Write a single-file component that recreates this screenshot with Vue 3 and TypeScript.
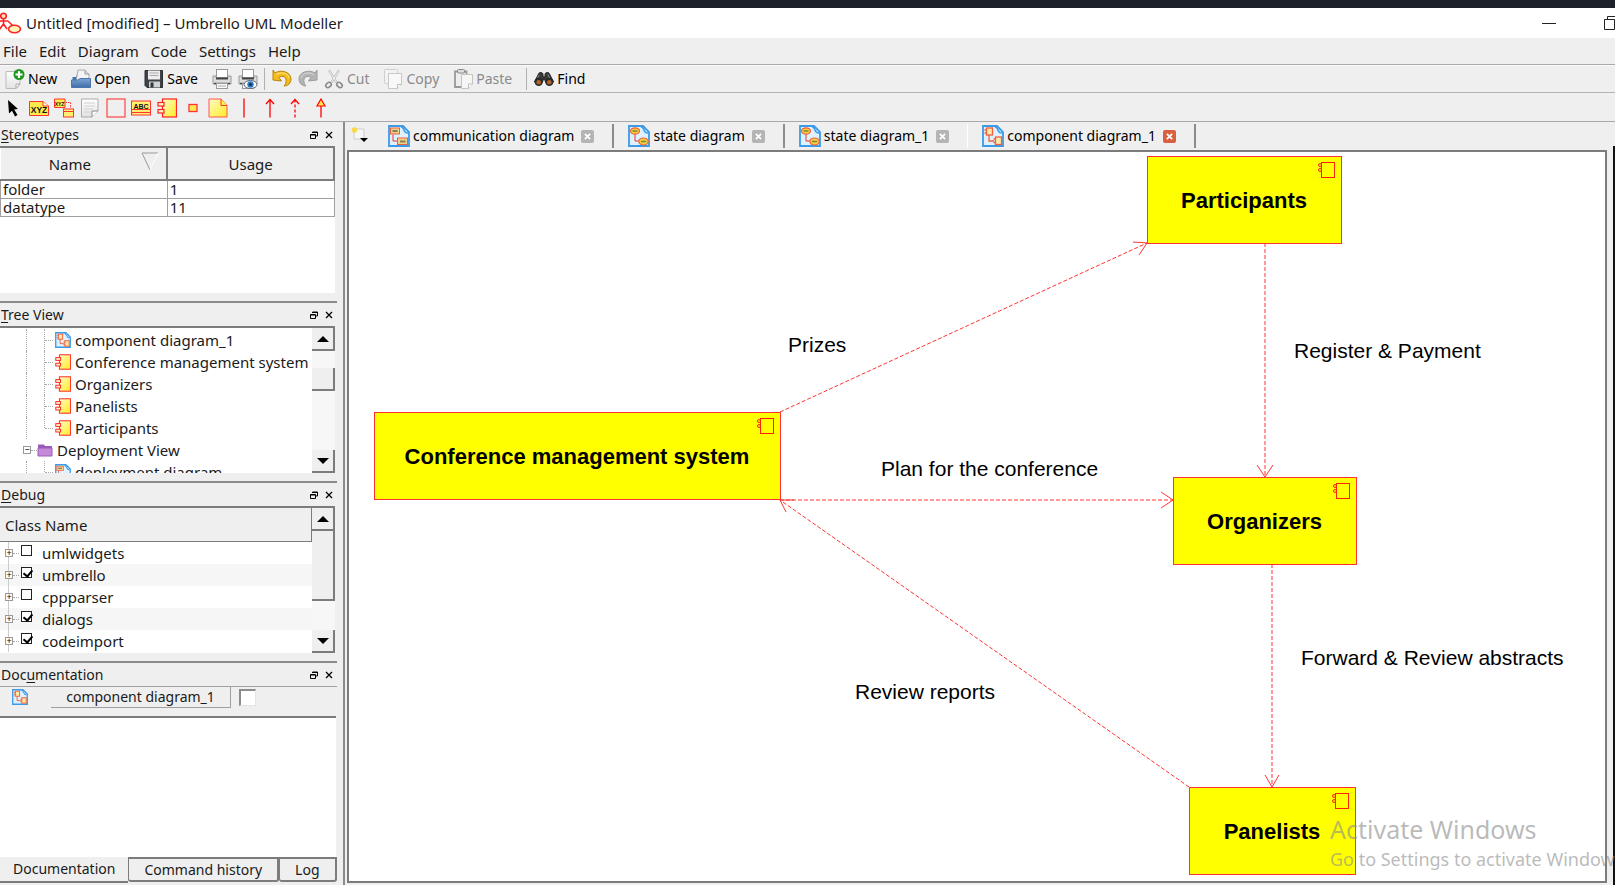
<script setup lang="ts">
import { ref } from 'vue'

interface Action { label?: string; name: string; icon: string; disabled?: boolean; sepBefore?: boolean }
interface Tab { label: string; icon: string }
interface Node { name: string; x: number; y: number; w: number }
interface Edge { line: string; head: string }
interface Label { text: string; x: number; y: number }

const menus = ['File', 'Edit', 'Diagram', 'Code', 'Settings', 'Help']

const actions: Action[] = [
  { label: 'New', name: 'New', icon: 'i-new' },
  { label: 'Open', name: 'Open', icon: 'i-open' },
  { label: 'Save', name: 'Save', icon: 'i-save' },
  { name: 'Print', icon: 'i-print' },
  { name: 'Print preview', icon: 'i-preview' },
  { name: 'Undo', icon: 'i-undo', sepBefore: true },
  { name: 'Redo', icon: 'i-redo', disabled: true },
  { label: 'Cut', name: 'Cut', icon: 'i-cut', disabled: true },
  { label: 'Copy', name: 'Copy', icon: 'i-copy', disabled: true },
  { label: 'Paste', name: 'Paste', icon: 'i-paste', disabled: true },
  { label: 'Find', name: 'Find', icon: 'i-find', sepBefore: true },
]

const tools = [
  ['Select', 't-select'], ['Artifact', 't-xyz'], ['Subsystem', 't-sub'], ['Note', 't-note'],
  ['Box', 't-box'], ['Text', 't-abc'], ['Component', 't-comp'], ['Port', 't-port'],
  ['Package', 't-pack'], ['Line', 't-line'], ['Association', 't-arrow'],
  ['Dependency', 't-dash'], ['Generalization', 't-gen'],
]

const stereotypes = [{ name: 'folder', usage: 1 }, { name: 'datatype', usage: 11 }]

const treeItems = [
  { label: 'component diagram_1', icon: 'd-component' },
  { label: 'Conference management system', icon: 't-comp' },
  { label: 'Organizers', icon: 't-comp' },
  { label: 'Panelists', icon: 't-comp' },
  { label: 'Participants', icon: 't-comp' },
]

const classes = ref([
  { name: 'umlwidgets', on: false },
  { name: 'umbrello', on: true },
  { name: 'cppparser', on: false },
  { name: 'dialogs', on: true },
  { name: 'codeimport', on: true },
])

const tabs: Tab[] = [
  { label: 'communication diagram', icon: 'd-comm' },
  { label: 'state diagram', icon: 'd-state' },
  { label: 'state diagram_1', icon: 'd-state' },
  { label: 'component diagram_1', icon: 'd-component' },
]
const activeTab = ref(3)

const dockTabs = ['Documentation', 'Command history', 'Log']
const activeDock = ref(0)
const documentation = ref('')
const docModified = ref(false)

const nodes: Node[] = [
  { name: 'Participants', x: 798, y: 4, w: 194 },
  { name: 'Conference management system', x: 25, y: 260, w: 406 },
  { name: 'Organizers', x: 824, y: 325, w: 183 },
  { name: 'Panelists', x: 840, y: 635, w: 166 },
]

const edges: Edge[] = [
  { line: 'M431 260L798 91', head: 'M784 90L798 91L790 103' },
  { line: 'M916 91V325', head: 'M908 313L916 325L924 313' },
  { line: 'M431 348H824', head: 'M812 340L824 348L812 356' },
  { line: 'M840 635L431 348', head: 'M445 348H431L437 360' },
  { line: 'M923 412V635', head: 'M916 623L923 635L930 623' },
]

const labels: Label[] = [
  { text: 'Prizes', x: 439, y: 200 },
  { text: 'Register & Payment', x: 945, y: 206 },
  { text: 'Plan for the conference', x: 532, y: 324 },
  { text: 'Forward & Review abstracts', x: 952, y: 513 },
  { text: 'Review reports', x: 506, y: 547 },
]
</script>

<template>
  <svg class="defs" aria-hidden="true">
    <defs>
      <linearGradient id="g-yel" x1="0" y1="0" x2="1" y2="1"><stop offset="0" stop-color="#fffbc8" /><stop offset="1" stop-color="#ffec20" /></linearGradient>
      <linearGradient id="g-page" x1="0" y1="0" x2="0" y2="1"><stop offset="0" stop-color="#fff" /><stop offset="1" stop-color="#e2e2e2" /></linearGradient>
      <linearGradient id="g-blue" x1="0" y1="0" x2="0" y2="1"><stop offset="0" stop-color="#7fa6d3" /><stop offset="1" stop-color="#3d6ca8" /></linearGradient>

      <symbol id="i-app" viewBox="0 0 22 22">
        <g fill="none" stroke="#f22" stroke-width="1.6">
          <circle cx="3.5" cy="4" r="2.8" fill="#ffd9c0" /><path d="M3.5 7V12M-1 9H8M3.5 12L-1 18M3.5 12L7 17M8 9L14 15" />
          <ellipse cx="14.5" cy="17" rx="6" ry="3.8" fill="#fff3b8" />
        </g>
      </symbol>
      <symbol id="i-new" viewBox="0 0 20 20">
        <path d="M1 2.5H15V15L11 19.5H1Z" fill="url(#g-page)" stroke="#bbb" /><path d="M15 15H11V19.5Z" fill="#fff" stroke="#aaa" />
        <circle cx="14" cy="5.5" r="5.5" fill="#1f9a1f" /><path d="M14 2V9M10.5 5.5H17.5" stroke="#fff" stroke-width="2.2" />
      </symbol>
      <symbol id="i-open" viewBox="0 0 20 20">
        <path d="M1.5 18V8H5L6 5.5H18V18Z" fill="#4474b0" /><path d="M7 1H14L18 5V13H5Z" fill="#f4f4f4" stroke="#aaa" /><path d="M14 1V5H18" fill="#ddd" stroke="#999" />
        <path d="M.5 11H7L9 9.5H19.5V18.5H.5Z" fill="url(#g-blue)" stroke="#4a76ad" />
      </symbol>
      <symbol id="i-save" viewBox="0 0 20 20">
        <path d="M1 1.5H18.5V18.5H3L1 16.5Z" fill="#3f4347" stroke="#2b2e31" /><rect x="4" y="1.5" width="12" height="9" fill="#eee" /><path d="M5.5 4H14.5M5.5 6.5H14.5" stroke="#aaa" />
        <rect x="5" y="12.5" width="11" height="6" fill="#cfd3d6" /><rect x="6.5" y="13.5" width="3" height="5" fill="#33373a" />
      </symbol>
      <symbol id="i-print" viewBox="0 0 20 20">
        <rect x="4.5" y=".5" width="11" height="8" fill="#fff" stroke="#999" /><path d="M1 7H4V9H16V7H19V15H1Z" fill="#dcdcdc" stroke="#999" />
        <path d="M4 8.5H16V10.5H4Z" fill="#444" /><path d="M2 14.5H18" stroke="#444" stroke-width="1.4" /><rect x="4.5" y="14.5" width="11" height="5" fill="#fafafa" stroke="#999" /><path d="M6 17H14" stroke="#aaa" />
      </symbol>
      <symbol id="i-preview" viewBox="0 0 20 20">
        <use href="#i-print" width="20" height="20" /><ellipse cx="12.5" cy="15.5" rx="6.5" ry="4" fill="#fff" stroke="#567" /><circle cx="12.5" cy="15.5" r="3.2" fill="#2b78bd" /><circle cx="12.5" cy="15.5" r="1.3" fill="#123" />
      </symbol>
      <symbol id="i-undo" viewBox="0 0 20 20">
        <path d="M1 1L3 4C9 0 19 3 19 10C19 14 16 17 12 17C15 14 15 8 11 7.5C9 7.2 8 8 7 8.5L9.5 12L1 11Z" fill="#f3bb1d" stroke="#b98505" />
        <path d="M4 5.5C9 2.5 16 4 17 9" fill="none" stroke="#ffe78a" />
      </symbol>
      <symbol id="i-redo" viewBox="0 0 20 20">
        <path d="M19 1L17 4C11 0 1 3 1 10C1 14 4 17 8 17C5 14 5 8 9 7.5C11 7.2 12 8 13 8.5L10.5 12L19 11Z" fill="#b4b4b4" stroke="#9c9c9c" />
        <path d="M16 5.5C11 2.5 4 4 3 9" fill="none" stroke="#d8d8d8" />
      </symbol>
      <symbol id="i-cut" viewBox="0 0 20 20">
        <path d="M5 1L12.5 13.5M15 1L7.5 13.5" stroke="#b9b9b9" stroke-width="2.4" /><path d="M5 1L12.5 13.5M15 1L7.5 13.5" stroke="#f2f2f2" />
        <g fill="none" stroke="#8b8b8b" stroke-width="1.6"><ellipse cx="4.5" cy="16" rx="2.2" ry="3" transform="rotate(50 4.5 16)" /><ellipse cx="15.5" cy="16" rx="2.2" ry="3" transform="rotate(-50 15.5 16)" /></g>
      </symbol>
      <symbol id="i-copy" viewBox="0 0 20 20">
        <rect x="1.5" y=".5" width="13" height="14" rx="1" fill="#f3f3f3" stroke="#cfcfcf" /><path d="M5.5 4.5H18.5V15.5L14.5 19.5H5.5Z" fill="#f8f8f8" stroke="#c8c8c8" /><path d="M18.5 15.5H14.5V19.5" fill="#fff" stroke="#bbb" />
      </symbol>
      <symbol id="i-paste" viewBox="0 0 20 20">
        <path d="M2 2.5H13.5V18H2Z" fill="#eee" stroke="#999" stroke-width="1.8" /><rect x="4.5" y=".5" width="7" height="3.5" rx="1" fill="#ddd" stroke="#888" />
        <path d="M8.5 5.5H19.5V15L15.5 19.5H8.5Z" fill="#f6f6f6" stroke="#c4c4c4" /><path d="M19.5 15H15.5V19.5" fill="#fff" stroke="#bbb" />
      </symbol>
      <symbol id="i-find" viewBox="0 0 20 20">
        <path d="M4.500 5C5 3 9 3 9 5.5V8H11V5.5C11 3 15 3 15.5 5L19.500 13H11.5L10.5 10H9.5L8.5 13H.5Z" fill="#3a3a3a" stroke="#1d1d1d" />
        <circle cx="4.7" cy="12.7" r="4.2" fill="#2a2a2a" /><circle cx="15.3" cy="12.7" r="4.2" fill="#2a2a2a" /><circle cx="4.7" cy="13.2" r="2.3" fill="#b4632a" /><circle cx="15.3" cy="13.2" r="2.3" fill="#b4632a" />
        <path d="M5 6L3.5 9M14 5.5L15.5 9" stroke="#888" />
      </symbol>

      <symbol id="t-select" viewBox="0 0 20 20"><path d="M5 2L15 11L11.2 11.5L14.5 17L12 18.5L9 12.8L6 15.5Z" fill="#000" /></symbol>
      <symbol id="t-xyz" viewBox="0 0 20 20">
        <path d="M.5 3.5H14L19.5 8V17.5H.5Z" fill="#ffe94d" stroke="#f33" /><path d="M14 3.5V8H19.5" fill="#fffbd0" stroke="#f33" />
        <text x="10" y="14.5" class="glyph" font-size="8.5">XYZ</text>
      </symbol>
      <symbol id="t-sub" viewBox="0 0 20 20">
        <path d="M.5 1H11V9.5H.5Z" fill="#ffe94d" stroke="#f33" /><text x="5.500" y="7.5" class="glyph" font-size="5">XYZ</text>
        <path d="M11.5 4.5H16.5V10" fill="none" stroke="#f33" stroke-dasharray="1.5 1" />
        <rect x="9.5" y="11" width="10" height="8" fill="#ffee70" stroke="#f33" /><path d="M9.5 13.5H19.5" stroke="#f33" />
      </symbol>
      <symbol id="t-note" viewBox="0 0 20 20">
        <path d="M1.5 1H18V13L12 19H1.5Z" fill="url(#g-page)" stroke="#aaa" /><path d="M4 5H15M4 8H15M4 11H13M4 14H11" stroke="#d0d0d4" /><path d="M18 13H12V19" fill="#fff" stroke="#888" />
      </symbol>
      <symbol id="t-box" viewBox="0 0 20 20"><rect x="1" y="1" width="18" height="18" fill="#efefef" stroke="#f22" /></symbol>
      <symbol id="t-abc" viewBox="0 0 20 20">
        <rect x=".5" y="3" width="19" height="14" fill="#ffef70" stroke="#f33" /><text x="10" y="10.5" class="glyph" font-size="7">ABC</text><path d="M.5 11.5H19.5M.5 14.5H19.5" stroke="#f33" />
      </symbol>
      <symbol id="t-comp" viewBox="0 0 20 20">
        <rect x="5.5" y="1" width="14" height="18" fill="url(#g-yel)" stroke="#f22" stroke-width="1.2" /><g fill="#fff8c0" stroke="#f22" stroke-width="1.2"><rect x="1" y="4.5" width="6" height="3.5" /><rect x="1" y="11.5" width="6" height="3.5" /></g>
      </symbol>
      <symbol id="t-port" viewBox="0 0 20 20"><rect x="6" y="6.5" width="8" height="7" fill="#ffe94d" stroke="#f33" stroke-width="1.3" /></symbol>
      <symbol id="t-pack" viewBox="0 0 20 20"><path d="M1 1H13L19 7.5V19H1Z" fill="url(#g-yel)" stroke="#f55" /><path d="M13 1V7.5H19" fill="#fff340" stroke="#f33" /></symbol>
      <symbol id="t-line" viewBox="0 0 20 20"><path d="M10 .5V19.5" stroke="#f00" stroke-width="1.3" /></symbol>
      <symbol id="t-arrow" viewBox="0 0 20 20"><path d="M10 1.5V19.5M6 6L10 1.5L14 6" fill="none" stroke="#f00" stroke-width="1.3" /></symbol>
      <symbol id="t-dash" viewBox="0 0 20 20"><path d="M10 1.5V19.5" stroke="#f00" stroke-width="1.3" stroke-dasharray="3 2" /><path d="M6 6L10 1.5L14 6" fill="none" stroke="#f00" stroke-width="1.3" /></symbol>
      <symbol id="t-gen" viewBox="0 0 20 20"><path d="M10 8V19.5" stroke="#f00" stroke-width="1.3" /><path d="M10 1L14 8H6Z" fill="#ffe94d" stroke="#f00" stroke-width="1.2" /></symbol>

      <symbol id="d-page" viewBox="0 0 22 22">
        <path d="M1 1H15L21 7V21H1Z" fill="#dff1ff" stroke="#3a9be8" stroke-width="1.8" /><path d="M13 2C17 2 14.5 8 20 8" fill="#fff" stroke="#3a9be8" stroke-width="1.5" />
      </symbol>
      <symbol id="d-comm" viewBox="0 0 22 22">
        <use href="#d-page" width="22" height="22" /><g fill="#f0d090" stroke="#f0603c"><rect x="2.5" y="3" width="9" height="6" /><rect x="9.5" y="13" width="10" height="6.5" /></g><path d="M5 9.5V16H9" fill="none" stroke="#e33" /><path d="M4.5 6H9.5M12 16.5H17.5" stroke="#8a8050" stroke-width="2" />
      </symbol>
      <symbol id="d-state" viewBox="0 0 22 22">
        <use href="#d-page" width="22" height="22" /><g fill="#f0d040" stroke="#f0603c" stroke-width="1.2"><ellipse cx="7" cy="6" rx="4.5" ry="3.2" /><ellipse cx="15.5" cy="16.5" rx="4.7" ry="3.5" /></g><path d="M7 9.5V16H10.5" fill="none" stroke="#e33" /><path d="M4.5 6H9.5M13 16.5H18" stroke="#8a8030" stroke-width="1.5" />
      </symbol>
      <symbol id="d-component" viewBox="0 0 22 22">
        <use href="#d-page" width="22" height="22" /><g fill="#ffe9a8" stroke="#f0603c" stroke-width="1.3"><rect x="4.5" y="3" width="6" height="7" /><rect x="13.5" y="12" width="6" height="7.5" /></g><path d="M2.5 5H5M2.5 8H5M7 10V16H12M11.5 14H14M11.5 17.5H14" fill="none" stroke="#f0603c" stroke-width="1.3" />
      </symbol>

      <symbol id="i-folder" viewBox="0 0 16 16"><path d="M1 2.5H7L8 4H15V14H1Z" fill="#9a5cb8" /><path d="M1 6H15V14H1Z" fill="#c48ad8" stroke="#9a5cb8" /></symbol>
      <symbol id="i-float" viewBox="0 0 8 8"><path d="M2.5 2V1H7.5V5H6M2.5 1.5H7.5M.5 3.5H5.5V7.5H.5ZM.5 4H5.5" fill="none" stroke="#000" /></symbol>
      <symbol id="i-x" viewBox="0 0 8 8"><path d="M1 1L7 7M7 1L1 7" stroke="#000" stroke-width="1.3" /></symbol>
      <symbol id="i-newtab" viewBox="0 0 20 20">
        <path d="M4 3H14V13H4Z" fill="#f6f6f6" stroke="#ccc" /><circle cx="4.5" cy="4" r="2.8" fill="#f7d94a" /><path d="M10 12H18L14 16Z" fill="#000" />
      </symbol>
    </defs>
  </svg>

  <div class="window">
    <div class="desktop-strip"></div>
    <header class="titlebar">
      <svg class="app-icon"><use href="#i-app" /></svg>
      <h1>Untitled [modified] – Umbrello UML Modeller</h1>
      <div class="win-buttons">
        <button type="button" aria-label="Minimize"><svg viewBox="0 0 14 14"><path d="M0 7.5H14" stroke="#222" /></svg></button>
        <button type="button" aria-label="Restore"><svg viewBox="0 0 14 14"><path d="M.5 3.5H10.5V13.5H.5ZM3.5 3V.5H13.5V10.5H11" fill="none" stroke="#222" /></svg></button>
      </div>
    </header>

    <nav class="menubar"><button v-for="m in menus" :key="m" type="button">{{ m }}</button></nav>

    <div class="toolbar" role="toolbar" aria-label="Main">
      <template v-for="a in actions" :key="a.name">
        <span v-if="a.sepBefore" class="sep"></span>
        <button type="button" :disabled="a.disabled" :aria-label="a.name" :class="{ labelled: a.label }">
          <svg class="ico"><use :href="'#' + a.icon" /></svg><span v-if="a.label">{{ a.label }}</span>
        </button>
      </template>
    </div>

    <div class="toolbox" role="toolbar" aria-label="Diagram tools">
      <button v-for="[name, icon] in tools" :key="name" type="button" :aria-label="name"><svg class="ico"><use :href="'#' + icon" /></svg></button>
    </div>

    <div class="main">
      <aside class="dock">
        <section class="panel">
          <header><h2><u>S</u>tereotypes</h2>
            <button type="button" aria-label="Float"><svg><use href="#i-float" /></svg></button>
            <button type="button" aria-label="Close"><svg><use href="#i-x" /></svg></button>
          </header>
          <div class="content">
            <table>
              <thead><tr>
                <th><span>Name</span><svg class="sort" viewBox="0 0 18 20"><path d="M17 1H1L9 18" fill="none" stroke="#999" /><path d="M17 1L9 18" stroke="#fff" /></svg></th>
                <th>Usage</th>
              </tr></thead>
              <tbody><tr v-for="s in stereotypes" :key="s.name"><td>{{ s.name }}</td><td>{{ s.usage }}</td></tr></tbody>
            </table>
          </div>
        </section>

        <section class="panel">
          <header><h2><u>T</u>ree View</h2>
            <button type="button" aria-label="Float"><svg><use href="#i-float" /></svg></button>
            <button type="button" aria-label="Close"><svg><use href="#i-x" /></svg></button>
          </header>
          <div class="content split">
            <ul class="tree">
              <li v-for="(t, i) in treeItems" :key="t.label" :class="{ last: i === treeItems.length - 1 }">
                <i class="guide"></i><i class="branch"></i><svg><use :href="'#' + t.icon" /></svg><span>{{ t.label }}</span>
              </li>
              <li class="folder"><button type="button" class="expander" aria-label="Collapse Deployment View">−</button><i class="dash"></i><svg><use href="#i-folder" /></svg><span>Deployment View</span></li>
              <li class="last"><i class="guide"></i><i class="branch"></i><svg><use href="#d-comm" /></svg><span>deployment diagram</span></li>
            </ul>
            <div class="scroll">
              <button type="button" aria-label="Scroll up"><i class="up"></i></button>
              <span class="track above"></span><span class="thumb small"></span><span class="track"></span>
              <button type="button" aria-label="Scroll down"><i class="down"></i></button>
            </div>
          </div>
        </section>

        <section class="panel">
          <header><h2><u>D</u>ebug</h2>
            <button type="button" aria-label="Float"><svg><use href="#i-float" /></svg></button>
            <button type="button" aria-label="Close"><svg><use href="#i-x" /></svg></button>
          </header>
          <div class="content split">
            <div class="debug">
              <div class="col-head">Class Name</div>
              <ul>
                <li v-for="c in classes" :key="c.name">
                  <button type="button" class="expander" :aria-label="'Expand ' + c.name">+</button><i class="dash"></i>
                  <label><input v-model="c.on" type="checkbox"><span>{{ c.name }}</span></label>
                </li>
              </ul>
            </div>
            <div class="scroll">
              <button type="button" aria-label="Scroll up"><i class="up"></i></button>
              <span class="thumb large"></span><span class="track"></span>
              <button type="button" aria-label="Scroll down"><i class="down"></i></button>
            </div>
          </div>
        </section>

        <section class="panel docs">
          <header><h2>Doc<u>u</u>mentation</h2>
            <button type="button" aria-label="Float"><svg><use href="#i-float" /></svg></button>
            <button type="button" aria-label="Close"><svg><use href="#i-x" /></svg></button>
          </header>
          <div class="doc-row">
            <svg><use href="#d-component" /></svg>
            <button type="button" class="doc-name">component diagram_1</button>
            <input v-model="docModified" type="checkbox" class="sunken" aria-label="Modified">
          </div>
          <textarea v-model="documentation" aria-label="Documentation"></textarea>
          <div class="dock-tabs" role="tablist">
            <button v-for="(t, i) in dockTabs" :key="t" type="button" role="tab" :aria-selected="i === activeDock" :class="{ active: i === activeDock }" @click="activeDock = i">{{ t }}</button>
          </div>
        </section>
      </aside>

      <main class="workspace">
        <div class="tabs" role="tablist">
          <button type="button" class="newtab" aria-label="New diagram"><svg class="ico"><use href="#i-newtab" /></svg></button>
          <div v-for="(t, i) in tabs" :key="t.label" class="tab" :class="{ active: i === activeTab, plain: i === activeTab - 1 }">
            <button type="button" role="tab" :aria-selected="i === activeTab" @click="activeTab = i"><svg><use :href="'#' + t.icon" /></svg><span>{{ t.label }}</span></button>
            <button type="button" class="close" :aria-label="'Close ' + t.label"><svg viewBox="0 0 8 8"><path d="M1 1L7 7M7 1L1 7" stroke="#fff" stroke-width="2" /></svg></button>
          </div>
        </div>
        <div class="canvas">
          <svg class="diagram" role="img" aria-label="Component diagram">
            <g v-for="n in nodes" :key="n.name">
              <rect :x="n.x" :y="n.y" :width="n.w" height="87" class="node" />
              <g class="mark">
                <rect :x="n.x + n.w - 20" :y="n.y + 6" width="13" height="15" />
                <circle :cx="n.x + n.w - 21" :cy="n.y + 9" r="1.5" /><circle :cx="n.x + n.w - 21" :cy="n.y + 14" r="1.5" />
              </g>
              <text :x="n.x + n.w / 2" :y="n.y + 52" class="node-name">{{ n.name }}</text>
            </g>
            <g v-for="e in edges" :key="e.line" class="edge"><path :d="e.line" class="dashed" /><path :d="e.head" /></g>
            <text v-for="l in labels" :key="l.text" :x="l.x" :y="l.y" class="edge-label">{{ l.text }}</text>
          </svg>
        </div>
      </main>
      <div class="edge-strip"></div>
    </div>

    <div class="watermark"><p>Activate Windows</p><p>Go to Settings to activate Windows.</p></div>
  </div>
</template>

<style>
html, body { margin: 0; overflow: hidden; }
</style>

<style scoped>
* { box-sizing: border-box; }
.defs { position: absolute; width: 0; height: 0; }
.glyph { font-family: "Liberation Sans", sans-serif; font-weight: bold; text-anchor: middle; fill: #111; }
.window { position: relative; display: flex; flex-direction: column; height: 100vh; overflow: hidden; background: #efefef; color: #1a1a1a; font: 15px/22px "Noto Sans", "Open Sans", sans-serif; }
button { padding: 0; border: 0; background: none; color: inherit; font: inherit; }
h1, h2, p, ul { margin: 0; padding: 0; font: inherit; list-style: none; }
svg { display: block; flex: none; }
.ico { width: 20px; height: 20px; }
.desktop-strip { flex: none; height: 8px; background: #1d2128; }
.titlebar { flex: none; display: flex; align-items: center; gap: 4px; height: 30px; background: #fff; overflow: hidden; }
.app-icon { width: 22px; height: 22px; }
.win-buttons { display: flex; gap: 48px; margin-left: auto; margin-right: -3px; }
.win-buttons svg { width: 14px; height: 14px; }
.menubar { flex: none; display: flex; gap: 12px; align-items: center; height: 27px; padding-left: 3px; border-bottom: 1px solid #a8a8a8; }
.toolbar { flex: none; display: flex; align-items: center; height: 28px; padding-left: 5px; border-bottom: 1px solid #b4b4b4; border-top: 1px solid #fafafa; color: #000; font-size: 14px; }
.toolbar button { display: flex; align-items: center; gap: 3px; margin-right: 6px; }
.toolbar button.labelled { margin-right: 14px; }
.toolbar button:disabled { color: #8a8a8a; }
.sep { width: 1px; height: 22px; margin-right: 7px; background: #b0b0b0; }
.toolbox { flex: none; display: grid; grid-template-columns: repeat(13, 1fr); justify-items: center; align-items: center; width: 334px; height: 28px; padding-top: 1px; }
.main { flex: 1; display: flex; min-height: 0; border-top: 1px solid #a8a8a8; }
.dock { flex: none; display: flex; flex-direction: column; width: 337px; }
.panel { flex: none; display: flex; flex-direction: column; height: 180px; border-top: 2px solid #8a8a8a; padding-bottom: 8px; }
.panel:first-child { border-top-width: 0; height: 179px; padding-top: 1px; }
.panel > header { flex: none; display: flex; align-items: center; gap: 7px; height: 23px; padding-right: 4px; font-size: 14px; }
.panel h2 { flex: 1; padding-left: 1px; }
.panel header svg { width: 8px; height: 8px; }
.panel u { text-underline-offset: 2px; }
.content { flex: 1; min-height: 0; width: 335px; background: #fff; border-top: 2px solid #7c7c7c; overflow: hidden; }
.split { display: flex; }
table { width: 100%; table-layout: fixed; border-collapse: collapse; }
th { position: relative; height: 32px; padding: 0; background: #efefef; border-right: 2px solid #7c7c7c; border-bottom: 2px solid #7c7c7c; font-weight: normal; }
th:first-child { padding-right: 27px; }
.sort { position: absolute; right: 7px; top: 4px; width: 18px; height: 20px; }
td { height: 18px; padding: 0 0 0 2px; border: 1px solid #a0a0a0; line-height: 17px; }
.tree { flex: 1; min-width: 0; padding-top: 1px; overflow: hidden; }
.tree li { display: flex; align-items: center; height: 22px; white-space: nowrap; }
.tree li svg { width: 16px; height: 16px; margin-right: 4px; }
.guide { width: 18px; height: 22px; margin-left: 26px; border-left: 1px dotted #aaa; }
.branch { position: relative; width: 11px; height: 22px; border-left: 1px dotted #aaa; }
.branch::after { content: ""; position: absolute; left: 0; top: 11px; width: 8px; border-top: 1px dotted #aaa; }
.last .branch { height: 11px; align-self: flex-start; }
.folder { padding-left: 23px; }
.dash { width: 6px; border-top: 1px dotted #aaa; }
.expander { flex: none; display: flex; align-items: center; justify-content: center; width: 8px; height: 8px; border: 1px solid #999; background: #fff; color: #000; font-size: 9px; line-height: 6px; }
.scroll { flex: none; display: flex; flex-direction: column; width: 23px; background: #f7f7f7; }
.scroll button, .thumb { flex: none; display: flex; align-items: center; justify-content: center; height: 23px; background: #efefef; border: solid #7c7c7c; border-width: 0 2px 2px 0; }
.thumb.large { height: 70px; }
.track { flex: 1; }
.track.above { flex: 0 0 17px; }
.up, .down { border: 6px solid transparent; }
.up { border-top: 0; border-bottom-color: #000; }
.down { border-bottom: 0; border-top-color: #000; }
.debug { flex: 1; }
.col-head { height: 34px; padding-left: 5px; line-height: 34px; background: #efefef; border: solid #7c7c7c; border-width: 0 1px 1px 0; }
.debug li { display: flex; align-items: center; height: 22px; padding-left: 5px; background: linear-gradient(#ccc, #ccc) 8px 0 / 1px 100% no-repeat; }
.debug li:nth-child(even) { background-color: #f6f6f6; }
.debug label { display: flex; align-items: center; gap: 10px; padding-left: 2px; line-height: 24px; }
.debug input { position: relative; appearance: none; width: 11px; height: 11px; margin: 0 0 6px; border: 1px solid #222; background: #fff; }
.debug input:checked::after { content: ""; position: absolute; left: 3px; top: 0; width: 4px; height: 7px; border: solid #000; border-width: 0 2px 2px 0; transform: rotate(40deg); }
.docs { flex: 1; padding-bottom: 2px; }
.doc-row { flex: none; display: flex; align-items: flex-start; height: 30px; padding-left: 12px; border-top: 1px solid #a0a0a0; }
.doc-row svg { width: 16px; height: 16px; margin: 2px 23px 0 0; }
.doc-name { width: 180px; height: 21px; border: solid #a0a0a0; border-width: 0 1px 1px 0; line-height: 20px; font-size: 14px; }
.sunken { appearance: none; width: 17px; height: 17px; margin: 2px 0 0 8px; background: #fff; border: 1px solid #e4e4e4; border-top: 2px solid #8c8c8c; border-left: 2px solid #8c8c8c; }
textarea { flex: 1; width: 336px; min-height: 0; resize: none; border: 0; border-top: 2px solid #7c7c7c; background: #fff; outline: 0; }
.dock-tabs { flex: none; display: flex; align-items: flex-start; height: 26px; font-size: 14px; border-top: 1px solid #7c7c7c; }
.dock-tabs button { height: 24px; padding: 0 15px; border: solid #7c7c7c; border-width: 1px 2px 2px 1px; line-height: 21px; border-radius: 0 0 3px 3px; white-space: nowrap; }
.dock-tabs button.active { height: 26px; margin-top: -1px; padding: 0 13px; background: #efefef; border-width: 0 0 2px; line-height: 24px; border-radius: 0; }
.workspace { flex: 1; min-width: 0; display: flex; flex-direction: column; margin-left: 6px; border-left: 2px solid #8c8c8c; padding: 0 0 2px 2px; }
.tabs { flex: none; display: flex; align-items: center; height: 28px; color: #000; font-size: 14px; }
.newtab { padding-left: 3px; margin-right: 4px; }
.tab { display: flex; align-items: center; height: 24px; padding: 0 18px 0 14px; border-right: 2px solid #8c8c8c; gap: 7px; white-space: nowrap; }
.tab.plain { border-right: 1px solid #fff; }
.tab button:first-child { display: flex; align-items: center; gap: 3px; }
.tab button:first-child svg { width: 22px; height: 22px; }
.close { display: flex; align-items: center; justify-content: center; width: 13px; height: 13px; border-radius: 2px; background: #b4b4b4; }
.close svg { width: 7px; height: 7px; }
.tab.active .close { background: #d9603f; }
.canvas { flex: 1; min-height: 0; background: #fff; border: 2px solid #7c7c7c; overflow: hidden; }
.diagram { width: 100%; height: 100%; }
.node { fill: #ff0; stroke: #f33; shape-rendering: crispEdges; }
.mark { fill: none; stroke: #f20; }
.mark rect { shape-rendering: crispEdges; }
.edge { fill: none; stroke: #f33; }
.dashed { stroke-dasharray: 4 2; }
.node-name { font: bold 22px "Liberation Sans", Arial, sans-serif; text-anchor: middle; fill: #000; }
.edge-label { font: 21px "Liberation Sans", Arial, sans-serif; fill: #000; }
.edge-strip { flex: none; width: 8px; margin-top: 24px; border-right: 2px solid #111; }
.watermark { position: absolute; right: 0; bottom: 12px; width: 285px; color: rgba(140, 140, 140, 0.6); white-space: nowrap; font-size: 18px; line-height: 28px; pointer-events: none; }
.watermark p:first-child { font-size: 25px; line-height: 32px; }
</style>
